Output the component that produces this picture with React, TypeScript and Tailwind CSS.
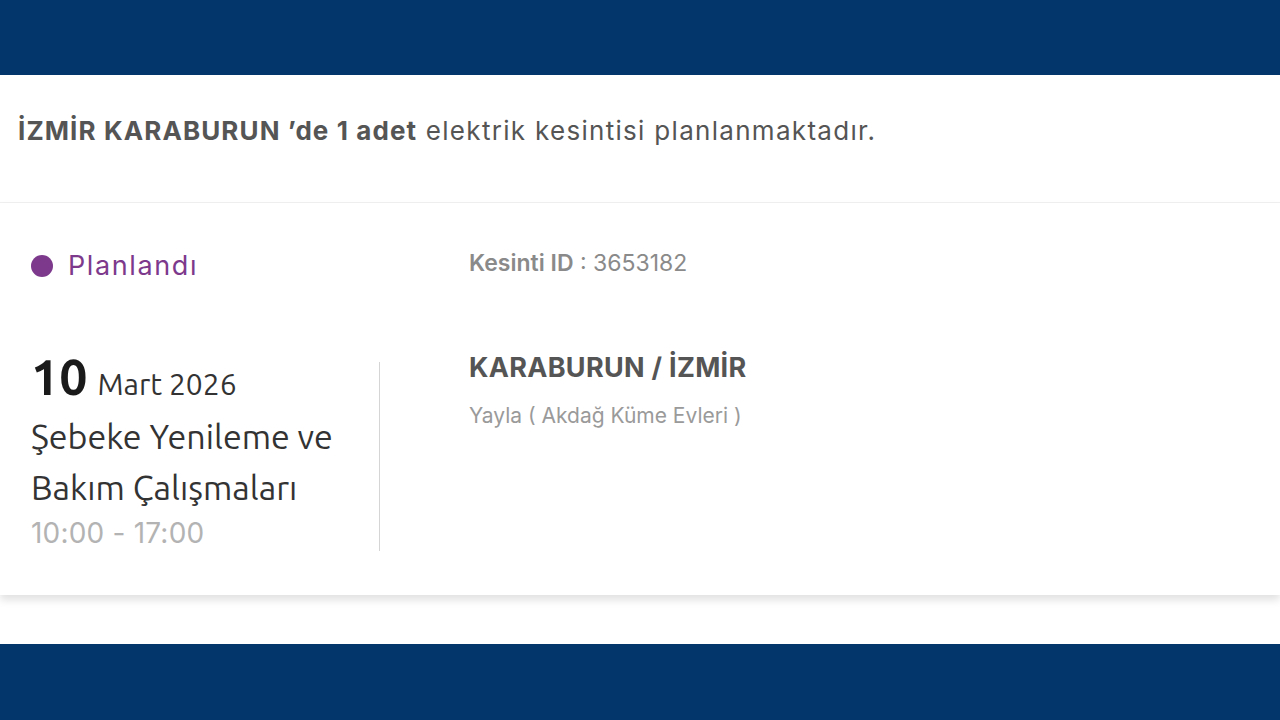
export default function App() {
  return (
    <div className="w-[1280px] h-[720px] flex flex-col bg-white overflow-hidden" style={{ fontFamily: "Inter, 'Noto Sans', sans-serif" }}>
      {/* Top bar */}
      <div className="h-[75px] bg-[#03366a] shrink-0" />

      {/* Summary */}
      <div className="h-[128px] flex items-center px-[18px] pb-[16px] border-b border-[#f0f0f0] shrink-0">
        <p className="text-[26px] text-[#555] tracking-[1.3px] whitespace-nowrap">
          <span className="font-bold tracking-[1.1px]">İZMİR KARABURUN ’de 1 adet</span> elektrik kesintisi planlanmaktadır.
        </p>
      </div>

      {/* Outage card */}
      <div className="h-[392px] shrink-0 flex shadow-[0_5px_8px_rgba(0,0,0,0.12)]">
        <div className="w-[379px] flex flex-col pl-[31px] pt-[48px]">
          <div className="flex items-center gap-[15px] h-[30px]">
            <span className="w-[22px] h-[22px] rounded-full bg-[#7d3a8c]" />
            <span className="text-[27px] text-[#7d3a8c] tracking-[1.6px]">Planlandı</span>
          </div>
          <div className="mt-[70px] flex items-baseline gap-[10px] h-[52px]" style={{ fontFamily: "Ubuntu, 'Noto Sans', sans-serif" }}>
            <span className="text-[50px] font-bold text-[#1a1a1a] leading-none">10</span>
            <span className="text-[30px] text-[#333] leading-none">Mart 2026</span>
          </div>
          <div className="text-[34px] leading-[51px] text-[#333] mt-[8px] whitespace-nowrap" style={{ fontFamily: "Ubuntu, 'Noto Sans', sans-serif" }}>
            Şebeke Yenileme ve<br />Bakım Çalışmaları
          </div>
          <div className="text-[28px] text-[#b3b3b3] leading-[40px] tracking-[0.2px]">10:00 - 17:00</div>
        </div>
        <div className="flex flex-col">
          <div className="h-[159px]" />
          <div className="w-px h-[189px] bg-[#d5d5d5]" />
        </div>
        <div className="flex flex-col pl-[89px] pt-[43px]">
          <div className="text-[23px] text-[#8a8a8a] whitespace-nowrap">
            <span className="font-semibold">Kesinti ID</span> : 3653182
          </div>
          <div className="mt-[67px] text-[27px] font-bold text-[#555] tracking-[0.3px] whitespace-nowrap">KARABURUN / İZMİR</div>
          <div className="mt-[12px] text-[21px] text-[#9a9a9a] whitespace-nowrap">Yayla ( Akdağ Küme Evleri )</div>
        </div>
      </div>

      <div className="flex-1" />
      {/* Bottom bar */}
      <div className="h-[76px] bg-[#03366a] shrink-0" />
    </div>
  );
}
